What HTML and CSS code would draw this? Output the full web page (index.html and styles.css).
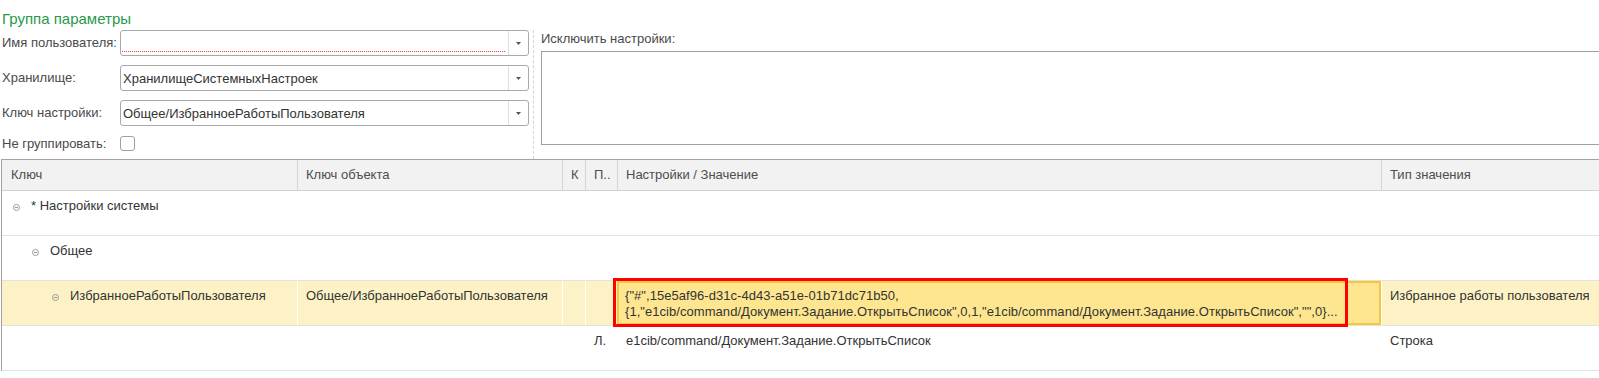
FILE: index.html
```html
<!DOCTYPE html>
<html lang="ru">
<head>
<meta charset="utf-8">
<title>Группа параметры</title>
<link rel="stylesheet" href="styles.css">
</head>
<body>
<div class="page">
  <div class="group-title">Группа параметры</div>
  <div class="params">
    <div class="params-left">
      <div class="form-row">
        <span class="label">Имя пользователя:</span>
        <div class="field">
          <div class="field-input required"></div>
          <div class="field-btn"><svg width="5" height="3" viewBox="0 0 5 3"><polygon points="0,0 5,0 2.5,3" fill="#555"/></svg></div>
        </div>
      </div>
      <div class="form-row">
        <span class="label">Хранилище:</span>
        <div class="field">
          <div class="field-input">ХранилищеСистемныхНастроек</div>
          <div class="field-btn"><svg width="5" height="3" viewBox="0 0 5 3"><polygon points="0,0 5,0 2.5,3" fill="#555"/></svg></div>
        </div>
      </div>
      <div class="form-row">
        <span class="label">Ключ настройки:</span>
        <div class="field">
          <div class="field-input">Общее/ИзбранноеРаботыПользователя</div>
          <div class="field-btn"><svg width="5" height="3" viewBox="0 0 5 3"><polygon points="0,0 5,0 2.5,3" fill="#555"/></svg></div>
        </div>
      </div>
      <div class="form-row check-row">
        <span class="label">Не группировать:</span>
        <span class="checkbox"></span>
      </div>
    </div>
    <div class="params-sep"></div>
    <div class="params-right">
      <div class="label right-label">Исключить настройки:</div>
      <div class="textarea"></div>
    </div>
  </div>

  <div class="grid">
    <div class="row head">
      <div class="cell c1">Ключ</div>
      <div class="cell">Ключ объекта</div>
      <div class="cell">К</div>
      <div class="cell">П..</div>
      <div class="cell">Настройки / Значение</div>
      <div class="cell">Тип значения</div>
    </div>
    <div class="row">
      <div class="cell c1 lvl1"><svg class="tree" width="7" height="7" viewBox="0 0 7 7"><circle cx="3.5" cy="3.5" r="3" fill="none" stroke="#9a9a9a" stroke-width="1"/><line x1="1.8" y1="3.5" x2="5.2" y2="3.5" stroke="#9a9a9a" stroke-width="1"/></svg>* Настройки системы</div>
      <div class="cell"></div>
      <div class="cell"></div>
      <div class="cell"></div>
      <div class="cell"></div>
      <div class="cell"></div>
    </div>
    <div class="row">
      <div class="cell c1 lvl2"><svg class="tree" width="7" height="7" viewBox="0 0 7 7"><circle cx="3.5" cy="3.5" r="3" fill="none" stroke="#9a9a9a" stroke-width="1"/><line x1="1.8" y1="3.5" x2="5.2" y2="3.5" stroke="#9a9a9a" stroke-width="1"/></svg>Общее</div>
      <div class="cell"></div>
      <div class="cell"></div>
      <div class="cell"></div>
      <div class="cell"></div>
      <div class="cell"></div>
    </div>
    <div class="row selected">
      <div class="cell c1 lvl3"><svg class="tree" width="7" height="7" viewBox="0 0 7 7"><circle cx="3.5" cy="3.5" r="3" fill="none" stroke="#9a9a9a" stroke-width="1"/><line x1="1.8" y1="3.5" x2="5.2" y2="3.5" stroke="#9a9a9a" stroke-width="1"/></svg>ИзбранноеРаботыПользователя</div>
      <div class="cell">Общее/ИзбранноеРаботыПользователя</div>
      <div class="cell"></div>
      <div class="cell"></div>
      <div class="cell value-cell">
        <div class="val-line">{"#",15e5af96-d31c-4d43-a51e-01b71dc71b50,</div>
        <div class="val-line">{1,"e1cib/command/Документ.Задание.ОткрытьСписок",0,1,"e1cib/command/Документ.Задание.ОткрытьСписок","",0}...</div>
        <div class="annot"></div>
      </div>
      <div class="cell">Избранное работы пользователя</div>
    </div>
    <div class="row">
      <div class="cell c1"></div>
      <div class="cell"></div>
      <div class="cell"></div>
      <div class="cell">Л.</div>
      <div class="cell">e1cib/command/Документ.Задание.ОткрытьСписок</div>
      <div class="cell">Строка</div>
    </div>
  </div>
</div>
</body>
</html>
```
FILE: styles.css
```css
html, body {
  margin: 0;
  padding: 0;
  overflow: hidden;
  background: #fff;
}
body {
  font-family: "Liberation Sans", Arial, sans-serif;
  font-size: 13px;
  color: #333;
}
.page {
  width: 1720px;
}
.group-title {
  margin: 10px 0 0 2px;
  font-size: 15px;
  line-height: 17px;
  height: 17px;
  color: #28994a;
}
.params {
  display: flex;
  margin-top: 3px;
  height: 121px;
}
.params-left {
  width: 527px;
  margin-left: 2px;
  display: flex;
  flex-direction: column;
  gap: 9px;
}
.form-row {
  display: flex;
  align-items: center;
  height: 26px;
  flex: none;
}
.check-row {
  height: 16px;
  align-items: flex-start;
}
.label {
  color: #4a4a4a;
  line-height: 16px;
}
.form-row .label {
  width: 118px;
  flex: none;
}
.check-row .label {
  padding-top: 1px;
}
.field {
  flex: 1;
  height: 26px;
  box-sizing: border-box;
  border: 1px solid #a9a9a9;
  border-radius: 3px;
  display: flex;
  background: #fff;
}
.field-input {
  flex: 1;
  display: flex;
  align-items: center;
  padding-left: 2px;
  color: #333;
  white-space: nowrap;
  overflow: hidden;
}
.field-input.required {
  margin: 0 3px 3px 1px;
  padding-left: 1px;
  border-bottom: 1px dotted #e64646;
}
.field-btn {
  width: 19px;
  flex: none;
  border-left: 1px solid #dedede;
  display: flex;
  align-items: center;
  justify-content: center;
}
.checkbox {
  width: 15px;
  height: 15px;
  box-sizing: border-box;
  margin-top: 1px;
  border: 1px solid #a0a0a0;
  border-radius: 3px;
  background: #fff;
}
.params-sep {
  width: 0;
  flex: none;
  margin-left: 4px;
  border-left: 1px dashed #d4d4d4;
  height: 129px;
}
.params-right {
  flex: 1;
  margin-left: 7px;
  display: flex;
  flex-direction: column;
}
.right-label {
  padding-top: 1px;
  height: 16px;
  margin-bottom: 4px;
}
.textarea {
  height: 94px;
  flex: none;
  box-sizing: border-box;
  border: 1px solid #a0a0a0;
  background: #fff;
}

/* table */
.grid {
  margin-top: 8px;
  margin-left: 1px;
  border-left: 1px solid #a0a0a0;
  border-top: 1px solid #a4a4a4;
}
.row {
  display: grid;
  grid-template-columns: 295px 265px 23px 32px 764px 1fr;
  height: 45px;
  box-sizing: border-box;
  border-bottom: 1px solid #e2e2e2;
}
.row.head {
  height: 31px;
  background: #f2f2f2;
  border-bottom: 1px solid #d2d2d2;
}
.cell {
  box-sizing: border-box;
  border-left: 1px solid transparent;
  padding: 7px 0 0 8px;
  line-height: 16px;
  white-space: nowrap;
  overflow: hidden;
  color: #333;
}
.cell.c1 {
  border-left: none;
  padding-left: 9px;
}
.head .cell {
  border-left-color: #d6d6d6;
  color: #4d4d4d;
}
.head .cell.c1 {
  border-left: none;
}
.tree {
  display: inline-block;
  vertical-align: -1px;
  margin-right: 11px;
}
.cell.lvl1 { padding-left: 11px; }
.cell.lvl2 { padding-left: 30px; }
.cell.lvl3 { padding-left: 50px; }

.row.selected {
  background: #fdf2c6;
}
.selected .cell {
  border-left-color: #fff;
}
.selected .cell.c1 {
  border-left: none;
}
.selected .value-cell {
  position: relative;
  overflow: visible;
  border: 2px solid #f6c73a;
  background: #fde68f;
  padding: 5px 0 0 6px;
}
.val-line {
  white-space: nowrap;
  overflow: hidden;
  width: 740px;
  letter-spacing: 0.05px;
}
.annot {
  position: absolute;
  left: -6px;
  top: -5px;
  width: 735px;
  height: 49px;
  box-sizing: border-box;
  border: 3px solid #ff0000;
  pointer-events: none;
}
```
